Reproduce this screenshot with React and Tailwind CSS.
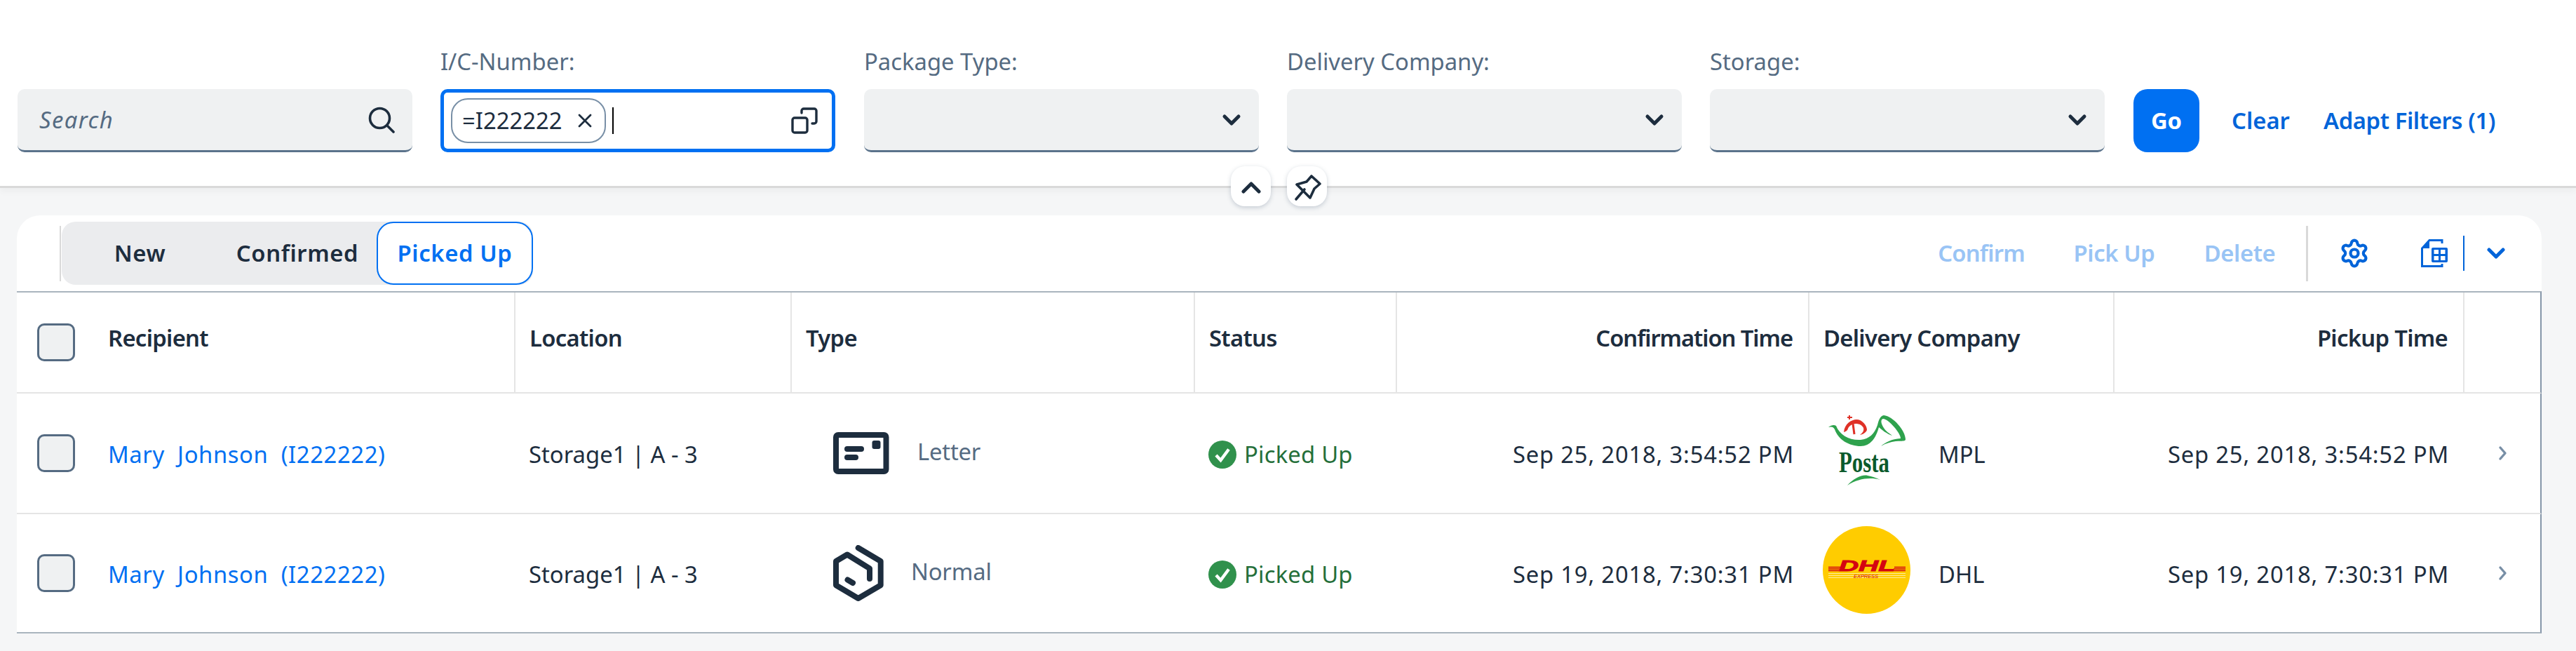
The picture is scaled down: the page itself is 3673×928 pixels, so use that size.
import { Settings } from 'lucide-react';

const font = { fontFamily: '"Noto Sans", sans-serif' };

const columns = 'grid grid-cols-[709px_394px_575px_288px_588px_435px_499px_112px]';

function ChevronDown({ className = 'w-[28px] h-[18px] text-[#1d2d3e]' }) {
  return (
    <svg viewBox="0 0 28 18" className={className} fill="none" stroke="currentColor" strokeWidth="5" strokeLinecap="round" strokeLinejoin="round">
      <path d="M4 4 L14 14 L24 4" />
    </svg>
  );
}

function SearchIcon() {
  return (
    <svg viewBox="0 0 38 38" className="w-[38px] h-[38px]" fill="none" stroke="#1d2d3e" strokeWidth="3.6" strokeLinecap="round">
      <circle cx="16.5" cy="16.5" r="14" />
      <path d="M27 27 L36 36" />
    </svg>
  );
}

function ValueHelpIcon() {
  return (
    <svg viewBox="0 0 38 38" className="w-[38px] h-[38px]" fill="none" stroke="#1d2d3e" strokeWidth="3.4" strokeLinecap="round" strokeLinejoin="round">
      <rect x="2" y="15" width="21" height="21" rx="3" />
      <path d="M15 8 V5 A3 3 0 0 1 18 2 H33 A3 3 0 0 1 36 5 V20 A3 3 0 0 1 33 23 H30" />
    </svg>
  );
}

function PinIcon() {
  return (
    <svg viewBox="0 0 57 57" className="w-[57px] h-[57px]" fill="none" stroke="#1d2d3e" strokeWidth="3.6" strokeLinecap="round" strokeLinejoin="round">
      <path d="M13 47 L25 33" />
      <path d="M14 26 L28 22 L35 14 L47 25 L39 32 L33 45 Z" />
    </svg>
  );
}

function ExportIcon() {
  return (
    <svg viewBox="0 0 38 41" className="w-[38px] h-[41px]">
      <path d="M30 6 V1.5 H12 L1.5 13 V38.5 H30 V35" fill="none" stroke="#0064d9" strokeWidth="3" />
      <path d="M12 1.5 L1.5 13 H12 Z" fill="#0064d9" />
      <rect x="15" y="12" width="23" height="21" rx="2" fill="#0064d9" />
      <rect x="18.5" y="15" width="6.5" height="6" fill="#fff" />
      <rect x="28" y="15" width="6.5" height="6" fill="#fff" />
      <rect x="18.5" y="24" width="6.5" height="6" fill="#fff" />
      <rect x="28" y="24" width="6.5" height="6" fill="#fff" />
    </svg>
  );
}

function LetterIcon() {
  return (
    <svg viewBox="0 0 80 60" className="w-[80px] h-[60px]" fill="#1d2d3e">
      <rect x="4" y="4" width="71.5" height="52" rx="3" fill="none" stroke="#1d2d3e" strokeWidth="8" />
      <rect x="55.5" y="12" width="12" height="12" rx="3" />
      <rect x="16" y="20" width="28" height="8" rx="4" />
      <rect x="16" y="32" width="20" height="8" rx="4" />
    </svg>
  );
}

function BoxIcon() {
  return (
    <svg viewBox="0 0 72 80" className="w-[72px] h-[80px]" fill="none" stroke="#1d2d3e" strokeWidth="8" strokeLinecap="round" strokeLinejoin="round">
      <path d="M35.7 4 L67.7 23 V57.3 L35.7 76 L4 57.3 V23 L20 13.5 L52 33.3 V48" />
      <path d="M20.5 49.5 L28 54" />
    </svg>
  );
}

function PostaLogo() {
  return (
    <svg viewBox="0 0 110 101" className="w-[110px] h-[101px]">
      <path d="M0 17 C4 14 8 13 11 15 C16 28 30 36 46 35 C58 34 66 26 70 14 C72 6 74 1 79 0 C92 1 110 22 110 34 C110 38 104 36 96 37 C88 38 82 40 75 44 C82 38 90 34 103 33 C104 27 86 5 78 5 C74 6 75 12 79 18 C82 23 86 25 91 29 C84 27 75 20 72 17 C68 32 60 44 46 44 C30 44 14 35 9 20 C7 16 4 16 0 17 Z" fill="#2ea24d" />
      <path d="M22 24 C23 12 33 6 40 6 C48 6 55 14 55 21 C54 24 50 27 45 28 C49 25 51 22 50 18 C48 14 44 12 39 12 C33 12 29 16 28 19 C27 22 25 23 22 24 Z" fill="#df3127" />
      <path d="M35 12 L37 27" stroke="#df3127" strokeWidth="3" />
      <path d="M30 0 V6 M27 3 H34" stroke="#df3127" strokeWidth="2" />
      <text transform="translate(15 81) scale(0.735 1)" fontFamily='"Liberation Serif", serif' fontWeight="700" fontSize="42" fill="#0b5a2c">Posta</text>
      <path d="M27 100 C36 90 48 84 56 86 C62 87 68 89 74 92 C60 88 42 90 27 100 Z" fill="#2ea24d" />
    </svg>
  );
}

function DhlLogo() {
  return (
    <svg viewBox="0 0 125 125" className="w-[125px] h-[125px]">
      <circle cx="62.5" cy="62.5" r="62.5" fill="#ffcc00" />
      <path d="M8 58.5 H25 M8 61 H24 M8 63.5 H23 M102 58.5 H118 M101 61 H118 M100 63.5 H118" stroke="#d40511" strokeWidth="1.3" />
      <text x="23" y="63.5" textLength="80" lengthAdjust="spacingAndGlyphs" fontFamily='"Liberation Sans", sans-serif' fontWeight="700" fontStyle="italic" fontSize="22" fill="#d40511" stroke="#d40511" strokeWidth="0.9">DHL</text>
      <path d="M8 67.5 H118 M8 70.5 H118 M8 73.5 H118" stroke="#ffe99a" strokeWidth="1" />
      <text x="44" y="74" textLength="35" lengthAdjust="spacingAndGlyphs" fontFamily='"Liberation Sans", sans-serif' fontStyle="italic" fontSize="7.5" fill="#d40511">EXPRESS</text>
    </svg>
  );
}

function StatusIcon() {
  return (
    <svg viewBox="0 0 40 40" className="w-[40px] h-[40px]">
      <circle cx="20" cy="20" r="20" fill="#30914c" />
      <path d="M11 21 L17.5 28 L29 12.5" fill="none" stroke="#fff" strokeWidth="4.4" />
    </svg>
  );
}

function Checkbox() {
  return <div className="w-[54px] h-[54px] shrink-0 rounded-[10px] border-[3px] border-[#556b82] bg-[#eff1f2]" />;
}

function FilterField({ label, children, focused, className = '' }) {
  return (
    <div className={`w-[563px] shrink-0 ${className}`}>
      <div className="text-[32.8px] leading-[44px] mb-[17px] text-[#556b82] whitespace-nowrap">{label}</div>
      <div
        className={
          focused
            ? 'h-[90px] flex items-center rounded-[10px] border-[5px] border-[#0070f2] bg-white pl-[10px] pr-[20px]'
            : 'h-[90px] flex items-center justify-between rounded-[10px] border-b-[3px] border-[#5b738b] bg-[#eff1f2] pl-[30px] pr-[25px]'
        }
      >
        {children}
      </div>
    </div>
  );
}

function FilterBar() {
  return (
    <div className="relative h-[268px] flex items-end pl-[25px] pb-[48px] gap-[40px] bg-white border-b-[3px] border-[#d9d9d9] shadow-[0_6px_8px_rgba(0,0,0,0.03)]">
      <div className="w-[563px] shrink-0 h-[90px] flex items-center justify-between rounded-[10px] border-b-[3px] border-[#5b738b] bg-[#eff1f2] pl-[31px] pr-[25px]">
        <span className="italic text-[32.8px] tracking-[1.4px] text-[#556b82]">Search</span>
        <SearchIcon />
      </div>

      <FilterField label="I/C-Number:" focused>
        <div className="h-[64px] w-[221px] flex items-center justify-between rounded-[24px] border-2 border-[#788fa6] pl-[14px] pr-[18px] text-[32.8px] text-[#1d2d3e]">
          <span>=I222222</span>
          <svg viewBox="0 0 20 20" className="w-[20px] h-[20px]" fill="none" stroke="#1d2d3e" strokeWidth="2.8" strokeLinecap="round">
            <path d="M2 2 L18 18 M18 2 L2 18" />
          </svg>
        </div>
        <div className="w-[2px] h-[38px] ml-[9px] bg-black" />
        <div className="ml-auto">
          <ValueHelpIcon />
        </div>
      </FilterField>

      <FilterField label="Package Type:" className="ml-[1px]"><span /><ChevronDown /></FilterField>
      <FilterField label="Delivery Company:"><span /><ChevronDown /></FilterField>
      <FilterField label="Storage:"><span /><ChevronDown /></FilterField>

      <div className="ml-[1px] flex items-center">
        <button className="w-[94px] h-[90px] rounded-[20px] bg-[#0070f2] text-white font-bold text-[32.8px]">Go</button>
        <span className="ml-[46px] w-[82px] text-center text-[32.8px] font-semibold text-[#0064d9] whitespace-nowrap">Clear</span>
        <span className="ml-[49px] text-[32.8px] font-semibold tracking-[-0.4px] text-[#0064d9] whitespace-nowrap">Adapt Filters (1)</span>
      </div>

      {/* collapse and pin buttons sit across the bar's bottom edge */}
      <div className="absolute left-[1755px] top-[237px] flex gap-[23px]">
        <button className="w-[57px] h-[57px] flex items-center justify-center rounded-[20px] bg-white shadow-[0_2px_6px_rgba(85,107,130,0.3)]">
          <svg viewBox="0 0 57 57" className="w-[57px] h-[57px]" fill="none" stroke="#1d2d3e" strokeWidth="5" strokeLinecap="round" strokeLinejoin="round">
            <path d="M18 36 L29 25 L40 36" />
          </svg>
        </button>
        <button className="w-[57px] h-[57px] flex items-center justify-center rounded-[20px] bg-white shadow-[0_2px_6px_rgba(85,107,130,0.3)]">
          <PinIcon />
        </button>
      </div>
    </div>
  );
}

function Toolbar() {
  return (
    <div className="h-[108px] flex items-center pl-[61px] pr-[51px]">
      <div className="w-[2px] h-[79px] bg-[#d9d9d9]" />
      <div className="ml-[1px] h-[90px] flex items-center rounded-[20px] bg-[#ebecee] text-[32.8px] font-semibold tracking-[0.6px] text-[#1d2d3e]">
        <span className="w-[223px] text-center">New</span>
        <span className="w-[226px] text-center">Confirmed</span>
        <span className="w-[223px] h-[90px] flex items-center justify-center rounded-[24px] border-2 border-[#0070f2] bg-white text-[#0070f2]">Picked Up</span>
      </div>

      <div className="ml-auto flex items-center text-[32.8px] font-semibold tracking-[-0.4px] text-[#99c4f5]">
        <span className="w-[120px] flex justify-center tracking-[-0.8px] whitespace-nowrap">Confirm</span>
        <span className="ml-[71px] w-[117px] flex justify-center whitespace-nowrap">Pick Up</span>
        <span className="ml-[71px] w-[99px] flex justify-center whitespace-nowrap">Delete</span>
        <div className="ml-[45px] w-[3px] h-[79px] bg-[#d9d9d9]" />
        <div className="ml-[44px] w-[44px] h-[44px]">
          <Settings size={44} strokeWidth={2.3} color="#0064d9" />
        </div>
        <div className="ml-[73px]">
          <ExportIcon />
        </div>
        <div className="ml-[22px] w-[2px] h-[50px] bg-[#0064d9]" />
        <ChevronDown className="ml-[31px] w-[28px] h-[18px] text-[#0064d9]" />
      </div>
    </div>
  );
}

function HeaderCell({ children, right, first }) {
  return (
    <div
      className={`flex items-center pb-[12px] text-[32.8px] font-semibold tracking-[-0.7px] text-[#1d2d3e] ${first ? '' : 'border-l-2 border-[#e5e5e5]'} ${
        right ? 'justify-end pr-[22px]' : 'pl-[20px]'
      }`}
    >
      {children}
    </div>
  );
}

function Row({ typeIcon, typeLabel, typeGap, logo, logoPad, company, confirmed, pickup, height, last }) {
  return (
    <div className={`${columns} ${height} border-b-2 border-r-2 ${last ? 'border-b-[#a9b4be]' : 'border-b-[#e5e5e5]'} border-r-[#8696a9] text-[32.8px] text-[#1d2d3e]`}>
      <div className="flex items-center pl-[29px]">
        <Checkbox />
        <span className="ml-[47px] pt-[3px] text-[#0070f2] tracking-[0.6px] whitespace-pre">{'Mary  Johnson  (I222222)'}</span>
      </div>
      <div className="flex items-center pl-[21px] pt-[3px] whitespace-nowrap">Storage1 | A - 3</div>
      <div className="flex items-center pl-[61px]">
        {typeIcon}
        <span className={`${typeGap} pb-[4px] text-[#556b82] tracking-[-0.2px]`}>{typeLabel}</span>
      </div>
      <div className="flex items-center pl-[21px] pt-[3px] text-[#256f3a]">
        <StatusIcon />
        <span className="ml-[11px] tracking-[0.2px] whitespace-nowrap">Picked Up</span>
      </div>
      <div className="flex items-center justify-end pr-[20px] pt-[3px] tracking-[0.8px] whitespace-nowrap">{confirmed}</div>
      <div className="flex items-center">
        <div className={`w-[186px] shrink-0 ${logoPad}`}>{logo}</div>
        <span className="pt-[3px]">{company}</span>
      </div>
      <div className="flex items-center justify-end pr-[20px] pt-[3px] tracking-[0.8px] whitespace-nowrap">{pickup}</div>
      <div className="flex items-center pl-[50px]">
        <svg viewBox="0 0 14 22" className="w-[14px] h-[22px]" fill="none" stroke="#788fa6" strokeWidth="3.4" strokeLinecap="round" strokeLinejoin="round">
          <path d="M3 3 L10 11 L3 19" />
        </svg>
      </div>
    </div>
  );
}

export default function App() {
  return (
    <div className="min-h-[928px] bg-[#f5f6f7]" style={font}>
      <FilterBar />
      <div className="mt-[39px] mx-[24px] w-[3600px] rounded-t-[33px] bg-white overflow-hidden">
        <Toolbar />
        <div className={`${columns} h-[146px] border-t-2 border-b-2 border-r-2 border-t-[#a9b4be] border-b-[#e5e5e5] border-r-[#8696a9]`}>
          <HeaderCell first>
            <div className="flex items-center pl-[9px]">
              <div className="mt-[12px]"><Checkbox /></div>
              <span className="ml-[47px]">Recipient</span>
            </div>
          </HeaderCell>
          <HeaderCell>Location</HeaderCell>
          <HeaderCell>Type</HeaderCell>
          <HeaderCell>Status</HeaderCell>
          <HeaderCell right><span className="tracking-[-1.1px]">Confirmation Time</span></HeaderCell>
          <HeaderCell>Delivery Company</HeaderCell>
          <HeaderCell right>Pickup Time</HeaderCell>
          <HeaderCell />
        </div>
        <Row
          height="h-[172px]"
          typeIcon={<LetterIcon />}
          typeLabel="Letter"
          typeGap="ml-[40px]"
          logo={<PostaLogo />}
          logoPad="pl-[29px] -mt-[7px]"
          company="MPL"
          confirmed="Sep 25, 2018, 3:54:52 PM"
          pickup="Sep 25, 2018, 3:54:52 PM"
        />
        <Row
          height="h-[170px]"
          typeIcon={<BoxIcon />}
          typeLabel="Normal"
          typeGap="ml-[39px]"
          logo={<DhlLogo />}
          logoPad="pl-[21px] -mt-[9px]"
          company="DHL"
          confirmed="Sep 19, 2018, 7:30:31 PM"
          pickup="Sep 19, 2018, 7:30:31 PM"
          last
        />
      </div>
    </div>
  );
}
